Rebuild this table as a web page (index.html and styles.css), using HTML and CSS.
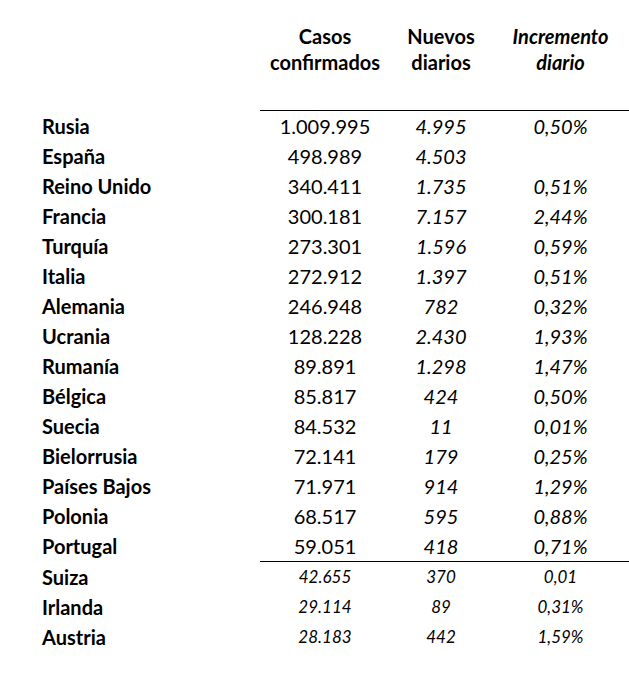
FILE: index.html
```html
<!DOCTYPE html>
<html lang="es">
<head>
<meta charset="utf-8">
<title>Casos confirmados</title>
<link rel="stylesheet" href="styles.css">
</head>
<body>
<div class="sheet">
<table class="cases">
<colgroup>
<col class="c-name"><col class="c-total"><col class="c-new"><col class="c-inc">
</colgroup>
<thead>
<tr>
<th class="h-name"></th>
<th class="h-num">Casos<br>confirmados</th>
<th class="h-num">Nuevos<br>diarios</th>
<th class="h-num h-it">Incremento<br>diario</th>
</tr>
</thead>
<tbody>
<tr><td class="name">Rusia</td><td class="total">1.009.995</td><td class="new">4.995</td><td class="inc">0,50%</td></tr>
<tr><td class="name">España</td><td class="total">498.989</td><td class="new">4.503</td><td class="inc"></td></tr>
<tr><td class="name">Reino Unido</td><td class="total">340.411</td><td class="new">1.735</td><td class="inc">0,51%</td></tr>
<tr><td class="name">Francia</td><td class="total">300.181</td><td class="new">7.157</td><td class="inc">2,44%</td></tr>
<tr><td class="name">Turquía</td><td class="total">273.301</td><td class="new">1.596</td><td class="inc">0,59%</td></tr>
<tr><td class="name">Italia</td><td class="total">272.912</td><td class="new">1.397</td><td class="inc">0,51%</td></tr>
<tr><td class="name">Alemania</td><td class="total">246.948</td><td class="new">782</td><td class="inc">0,32%</td></tr>
<tr><td class="name">Ucrania</td><td class="total">128.228</td><td class="new">2.430</td><td class="inc">1,93%</td></tr>
<tr><td class="name">Rumanía</td><td class="total">89.891</td><td class="new">1.298</td><td class="inc">1,47%</td></tr>
<tr><td class="name">Bélgica</td><td class="total">85.817</td><td class="new">424</td><td class="inc">0,50%</td></tr>
<tr><td class="name">Suecia</td><td class="total">84.532</td><td class="new">11</td><td class="inc">0,01%</td></tr>
<tr><td class="name">Bielorrusia</td><td class="total">72.141</td><td class="new">179</td><td class="inc">0,25%</td></tr>
<tr><td class="name">Países Bajos</td><td class="total">71.971</td><td class="new">914</td><td class="inc">1,29%</td></tr>
<tr><td class="name">Polonia</td><td class="total">68.517</td><td class="new">595</td><td class="inc">0,88%</td></tr>
<tr class="last-main"><td class="name">Portugal</td><td class="total">59.051</td><td class="new">418</td><td class="inc">0,71%</td></tr>
<tr class="minor"><td class="name">Suiza</td><td class="total">42.655</td><td class="new">370</td><td class="inc">0,01</td></tr>
<tr class="minor"><td class="name">Irlanda</td><td class="total">29.114</td><td class="new">89</td><td class="inc">0,31%</td></tr>
<tr class="minor"><td class="name">Austria</td><td class="total">28.183</td><td class="new">442</td><td class="inc">1,59%</td></tr>
</tbody>
</table>
</div>
</body>
</html>
```
FILE: styles.css
```css
html, body {
  margin: 0;
  padding: 0;
  background: #ffffff;
}
body {
  font-family: Lato, "Open Sans", "Liberation Sans", sans-serif;
  color: #000000;
  width: 629px;
  height: 689px;
  overflow: hidden;
}
.sheet {
  padding-top: 23px;
  padding-left: 42px;
}
.cases {
  border-collapse: collapse;
  table-layout: fixed;
  width: 587px;
}
.c-name { width: 218px; }
.c-total { width: 130px; }
.c-new { width: 102px; }
.c-inc { width: 137px; }

.cases th {
  padding: 0 0 35px 0;
  font-size: 20px;
  line-height: 26px;
  font-weight: 700;
  text-align: center;
  vertical-align: top;
}
.cases th.h-num {
  border-bottom: 1px solid #000;
}
.cases th.h-it {
  font-style: italic;
}
.cases td {
  padding: 0;
  height: 30px;
  font-size: 20px;
  line-height: 30px;
  text-align: center;
  white-space: nowrap;
}
.cases td.name {
  text-align: left;
  font-weight: 700;
}
.cases td.new,
.cases td.inc {
  font-style: italic;
}
.last-main td.total,
.last-main td.new,
.last-main td.inc {
  border-bottom: 1px solid #000;
}
.minor td.total,
.minor td.new,
.minor td.inc {
  font-size: 17px;
  font-style: italic;
}
```
